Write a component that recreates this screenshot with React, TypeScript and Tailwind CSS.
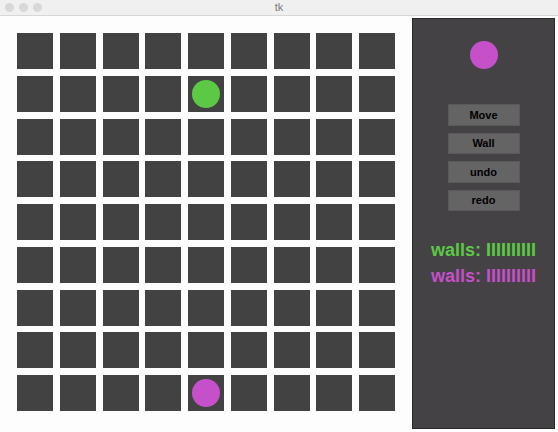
const ROWS = 9;
const COLS = 9;

function Cell({ piece }: { piece?: "green" | "purple" }) {
  return (
    <div className="w-[36px] h-[36px] bg-[#434243] flex items-center justify-center">
      {piece === "green" && <div className="w-[28px] h-[28px] rounded-full bg-[#5bc944]" />}
      {piece === "purple" && <div className="w-[28px] h-[28px] rounded-full bg-[#c550c9]" />}
    </div>
  );
}

export default function App() {
  const cells = [];
  for (let r = 0; r < ROWS; r++) {
    for (let c = 0; c < COLS; c++) {
      let piece: "green" | "purple" | undefined;
      if (r === 1 && c === 4) piece = "green";
      if (r === 8 && c === 4) piece = "purple";
      cells.push(<Cell key={`${r}-${c}`} piece={piece} />);
    }
  }

  return (
    <div className="w-[558px] h-[432px] bg-[#fdfdfd] overflow-hidden font-['Liberation_Sans',Arial,sans-serif]">
      {/* title bar */}
      <div className="relative h-[16px] bg-[#f1f0f1] border-b border-[#d8d7d8] flex items-center">
        <div className="flex gap-[5px] pl-[5px]">
          <div className="w-[9px] h-[9px] rounded-full bg-[#d9d8d9]" />
          <div className="w-[9px] h-[9px] rounded-full bg-[#d9d8d9]" />
          <div className="w-[9px] h-[9px] rounded-full bg-[#d9d8d9]" />
        </div>
        <div className="absolute inset-0 flex items-center justify-center text-[11px] text-[#777] leading-none">
          tk
        </div>
      </div>

      <div className="flex">
        <div className="pl-[17px] pt-[17px] w-[412px]">
          <div className="grid grid-cols-[repeat(9,36px)] gap-[6.75px]">{cells}</div>
        </div>

        <div className="mt-[2px] w-[143px] h-[411px] bg-[#444244] border border-[#2a292a] flex flex-col items-center">
          <div className="mt-[22px] w-[28px] h-[28px] rounded-full bg-[#c550c9]" />
          <div className="mt-[35px] flex flex-col gap-[7px]">
            {["Move", "Wall", "undo", "redo"].map((t) => (
              <div
                key={t}
                className="w-[72px] h-[21.5px] bg-[#656465] border border-[#5a595a] flex items-center justify-center text-[11px] font-bold text-black"
              >
                {t}
              </div>
            ))}
          </div>
          <div className="mt-[26px] text-[18px] font-bold leading-[26px] whitespace-nowrap">
            <div className="text-[#5bc944]">walls: IIIIIIIIII</div>
            <div className="text-[#c550c9]">walls: IIIIIIIIII</div>
          </div>
        </div>
      </div>
    </div>
  );
}
